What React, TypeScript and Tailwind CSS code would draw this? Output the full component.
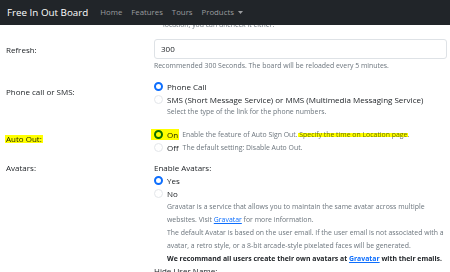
import React from "react";

const font = { fontFamily: '"Open Sans", "Noto Sans", sans-serif' };

const Radio: React.FC<{ checked?: boolean }> = ({ checked }) =>
  checked ? (
    <span className="inline-block w-[9px] h-[9px] rounded-full border-[2.5px] border-[#0d6efd] bg-white shrink-0" />
  ) : (
    <span className="inline-block w-[9px] h-[9px] rounded-full border border-[#e3e6ea] bg-white shrink-0" />
  );

const Highlight: React.FC<{ className: string }> = ({ className }) => (
  <span className={`absolute bg-[#ffff00] mix-blend-multiply pointer-events-none ${className}`} />
);

export default function App() {
  return (
    <div className="w-[450px] h-[272px] overflow-hidden bg-white text-[#212529]" style={font}>
      <nav className="relative z-10 h-[25px] bg-[#212529] flex items-center pl-[7px]">
        <span className="text-white text-[9.8px] leading-none mr-[12px]">Free In Out Board</span>
        <div className="flex items-center gap-[9px] text-[7.8px] text-[#9a9c9f] leading-none">
          <span>Home</span>
          <span>Features</span>
          <span>Tours</span>
          <span className="flex items-center gap-[4px]">
            Products
            <svg width="5" height="3" viewBox="0 0 5 3">
              <path d="M0 0h5L2.5 3z" fill="#9a9c9f" />
            </svg>
          </span>
        </div>
      </nav>

      <div className="grid grid-cols-[148px_1fr] pl-[6px] pr-[3px] text-[8px]">
        {/* tail of the previous row, mostly hidden under the navbar */}
        <div />
        <div className="-mt-[6px] pl-[9px] text-[6.9px] leading-[12px] text-[#6c757d]">
          location, you can uncheck it either.
        </div>

        {/* Refresh */}
        <div className="mt-[8px] pt-[4px] leading-[13px]">Refresh:</div>
        <div className="mt-[8px]">
          <div className="h-[20px] border border-[#dee2e6] rounded-[3px] flex items-center px-[6px] leading-none">
            300
          </div>
          <div className="mt-[1px] text-[6.9px] leading-[12px] text-[#6c757d]">
            Recommended 300 Seconds. The board will be reloaded every 5 minutes.
          </div>
        </div>

        {/* Phone call or SMS */}
        <div className="mt-[8px] pt-[5px] leading-[13px]">Phone call or SMS:</div>
        <div className="mt-[8px] leading-[13px]">
          <div className="flex items-center gap-[4px]">
            <Radio checked />
            <span>Phone Call</span>
          </div>
          <div className="flex items-center gap-[4px]">
            <Radio />
            <span className="whitespace-nowrap">SMS (Short Message Service) or MMS (Multimedia Messaging Service)</span>
          </div>
          <div className="pl-[13px] text-[6.9px] leading-[12px] text-[#6c757d]">
            Select the type of the link for the phone numbers.
          </div>
        </div>

        {/* Auto Out */}
        <div className="mt-[10px] pt-[4px] leading-[13px]">
          <span className="relative">
            Auto Out:
            <Highlight className="-left-[1px] -right-[1px] top-[2px] bottom-[1px]" />
          </span>
        </div>
        <div className="mt-[10px] leading-[13px]">
          <div className="flex items-center gap-[4px] whitespace-nowrap">
            <span className="relative flex items-center gap-[4px]">
              <Radio checked />
              <span>On</span>
              <Highlight className="-left-[3px] -right-[1px] top-[1px] bottom-[1px]" />
            </span>
            <span className="text-[6.9px] text-[#6c757d]">
              Enable the feature of Auto Sign Out.{" "}
              <span className="relative">
                Specify the time on Location page
                <Highlight className="-left-[1px] -right-[1px] top-[3px] bottom-[2px]" />
              </span>
              .
            </span>
          </div>
          <div className="flex items-center gap-[4px] whitespace-nowrap">
            <Radio />
            <span>Off</span>
            <span className="text-[6.9px] text-[#6c757d]">The default setting: Disable Auto Out.</span>
          </div>
        </div>

        {/* Avatars */}
        <div className="mt-[7px] leading-[13px]">Avatars:</div>
        <div className="mt-[7px] leading-[13px]">
          <div>Enable Avatars:</div>
          <div className="flex items-center gap-[4px]">
            <Radio checked />
            <span>Yes</span>
          </div>
          <div className="flex items-center gap-[4px]">
            <Radio />
            <span>No</span>
          </div>
          <div className="pl-[13px] text-[6.9px] text-[#6c757d] whitespace-nowrap">
            <div>Gravatar is a service that allows you to maintain the same avatar across multiple</div>
            <div>
              websites. Visit <span className="text-[#0d6efd] underline">Gravatar</span> for more information.
            </div>
            <div>The default Avatar is based on the user email. If the user email is not associated with a</div>
            <div>avatar, a retro style, or a 8-bit arcade-style pixelated faces will be generated.</div>
            <div className="font-bold text-[#212529]">
              We recommand all users create their own avatars at{" "}
              <span className="text-[#0d6efd] underline">Gravatar</span> with their emails.
            </div>
          </div>
          <div className="-mt-[1px]">Hide User Name:</div>
        </div>
      </div>
    </div>
  );
}
